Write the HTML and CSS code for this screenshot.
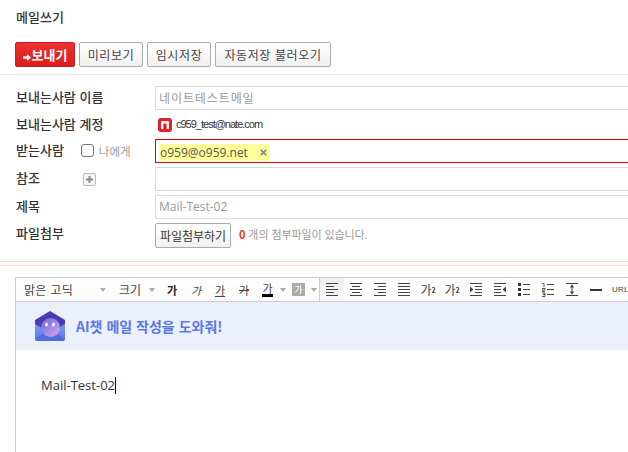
FILE: index.html
```html
<!DOCTYPE html>
<html lang="ko">
<head>
<meta charset="utf-8">
<title>메일쓰기</title>
<link rel="stylesheet" href="styles.css">
</head>
<body>
<svg class="defs" width="0" height="0" aria-hidden="true">
  <defs>
    <linearGradient id="mbody" x1="0" y1="0" x2="0" y2="1"><stop offset="0" stop-color="#7fa0f2"/><stop offset="1" stop-color="#5b78e6"/></linearGradient>
    <linearGradient id="mface" x1="0" y1="0" x2="1" y2="1"><stop offset="0" stop-color="#6468dc"/><stop offset="0.55" stop-color="#a58ae8"/><stop offset="1" stop-color="#e6a8d8"/></linearGradient>
  </defs>
</svg>
<header class="title-bar"><h1 class="title">메일쓰기</h1></header>
<div class="actions">
  <button class="btn btn-send"><svg class="arrow" width="8" height="7" viewBox="0 0 8 7"><path d="M0 2.200h4V0l4 3.500L4 7V4.800H0z" fill="#fff"/></svg>보내기</button>
  <button class="btn">미리보기</button>
  <button class="btn">임시저장</button>
  <button class="btn btn-wide">자동저장 불러오기</button>
</div>
<form class="form">
  <div class="row">
    <label class="label">보내는사람 이름</label>
    <div class="field placeholder">네이트테스트메일</div>
  </div>
  <div class="row row-account">
    <label class="label">보내는사람 계정</label>
    <div class="account">
      <svg class="nate" width="14" height="14" viewBox="0 0 14 14"><rect width="14" height="14" rx="3" fill="#e0202a"/><path d="M3 11V4.500C3 3.600 3.600 3 4.500 3h5C10.400 3 11 3.600 11 4.500V11H8.600V5.400H5.400V11z" fill="#fff"/></svg>
      <span class="account-mail">c959_test@nate.com</span>
    </div>
  </div>
  <div class="row">
    <div class="label label-check">
      <span>받는사람</span>
      <span class="check-wrap"><span class="checkbox"></span><span class="me">나에게</span></span>
    </div>
    <div class="field field-to"><span class="chip">o959@o959.net<svg class="chip-x" width="7" height="7" viewBox="0 0 7 7"><path d="M.8.8l5.400 5.400M6.200.8L.8 6.200" stroke="#888" stroke-width="1.700"/></svg></span></div>
  </div>
  <div class="row">
    <div class="label label-check">
      <span>참조</span>
      <span class="plus"><svg width="7" height="7" viewBox="0 0 7 7"><path d="M2.500 0h2v2.500H7v2H4.500V7h-2V4.500H0v-2h2.500z" fill="#8a8a8a"/></svg></span>
    </div>
    <div class="field"></div>
  </div>
  <div class="row">
    <label class="label">제목</label>
    <div class="field placeholder latin">Mail-Test-02</div>
  </div>
  <div class="row row-file">
    <label class="label">파일첨부</label>
    <div class="attach">
      <button class="btn btn-file" type="button">파일첨부하기</button>
      <span class="attach-note"><b class="count">0</b> 개의 첨부파일이 있습니다.</span>
    </div>
  </div>
</form>
<div class="double-rule"></div>
<section class="editor">
  <div class="toolbar">
    <span class="font-select">맑은 고딕</span><i class="caret caret-font"></i>
    <span class="size-select">크기</span><i class="caret caret-size"></i>
    <span class="tb b">가</span>
    <span class="tb it">가</span>
    <span class="tb un">가</span>
    <span class="tb st">가</span>
    <span class="tb color"><span class="color-g">가</span></span><i class="caret caret-color"></i>
    <span class="bgcolor">가</span><i class="caret caret-bg"></i>
    <span class="tb active"><svg width="12" height="13" viewBox="0 0 12 13"><path d="M0 .5h12M0 3.500h8M0 6.500h12M0 9.500h8M0 12.500h12" stroke="#444"/></svg></span>
    <span class="tb"><svg width="12" height="13" viewBox="0 0 12 13"><path d="M0 .5h12M2 3.500h8M0 6.500h12M2 9.500h8M0 12.500h12" stroke="#444"/></svg></span>
    <span class="tb"><svg width="12" height="13" viewBox="0 0 12 13"><path d="M0 .5h12M4 3.500h8M0 6.500h12M4 9.500h8M0 12.500h12" stroke="#444"/></svg></span>
    <span class="tb"><svg width="12" height="13" viewBox="0 0 12 13"><path d="M0 .5h12M0 3.500h12M0 6.500h12M0 9.500h12M0 12.500h12" stroke="#444"/></svg></span>
    <span class="tb tb-script">가<sup>2</sup></span>
    <span class="tb tb-script">가<sub>2</sub></span>
    <span class="tb"><svg width="12" height="13" viewBox="0 0 12 13"><path d="M0 .5h12M5 3.500h7M5 6.500h7M5 9.500h7M0 12.500h12" stroke="#444"/><path d="M0 3.500l3.500 3L0 9.500z" fill="#444"/></svg></span>
    <span class="tb"><svg width="12" height="13" viewBox="0 0 12 13"><path d="M0 .5h12M0 3.500h7M0 6.500h7M0 9.500h7M0 12.500h12" stroke="#444"/><path d="M12 3.500L8.500 6.500l3.500 3z" fill="#444"/></svg></span>
    <span class="tb"><svg width="12" height="13" viewBox="0 0 12 13"><path d="M0 0h3v3H0zM0 5h3v3H0zM0 10h3v3H0z" fill="#333"/><path d="M5 1.500h7M5 6.500h7M5 11.500h7" stroke="#444"/></svg></span>
    <span class="tb"><svg width="12" height="14" viewBox="0 0 12 14"><path d="M5 1.500h7M5 6.500h7M5 11.500h7" stroke="#444"/><path d="M.5.500h1.500v3.500M0 5.500h3V7H0v1.500h3M0 10h3v1.500H1M1 11.500h2V13.500H0" stroke="#444" fill="none" stroke-width=".9"/></svg></span>
    <span class="tb"><svg width="12" height="13" viewBox="0 0 12 13"><path d="M0 .5h12M0 12.500h12M6 2v9" stroke="#444"/><path d="M6 1.500L3.800 4.500h4.400zM6 11.500L3.800 8.500h4.400z" fill="#444"/></svg></span>
    <span class="tb"><svg width="12" height="2" viewBox="0 0 12 2"><rect width="12" height="2" fill="#333"/></svg></span>
    <span class="tb tb-url">URL</span>
  </div>
  <div class="banner">
    <svg class="mascot" width="30" height="30" viewBox="0 0 30 30">
      <path d="M0 9h30v18a3 3 0 0 1-3 3H3a3 3 0 0 1-3-3z" fill="url(#mbody)"/>
      <path d="M0 9L15 0l15 9v4L15 22 0 13z" fill="#4a3bb5"/>
      <path d="M0 28L11 20h8l11 8-1 2H1z" fill="#4f6de0"/>
      <circle cx="15.500" cy="16.500" r="9.500" fill="url(#mface)"/>
      <ellipse cx="11.500" cy="13.500" rx="1.400" ry="2" fill="#fff"/>
      <ellipse cx="18.500" cy="13.500" rx="1.400" ry="2" fill="#fff"/>
    </svg>
    <span class="banner-text">AI챗 메일 작성을 도와줘!</span>
  </div>
  <div class="body-area"><span class="body-text">Mail-Test-02</span><span class="cursor"></span></div>
</section>
</body>
</html>
```
FILE: styles.css
```css
* { box-sizing: border-box; }
html, body { margin: 0; padding: 0; }
body {
  width: 628px;
  height: 452px;
  overflow: hidden;
  background: #fff;
  color: #333;
  font-family: "Noto Sans CJK KR", "Noto Sans", sans-serif;
  font-size: 12px;
}
.defs { position: absolute; }
.title-bar { height: 42px; padding: 9px 0 0 16px; }
.title { margin: 0; font-size: 13px; font-weight: 500; line-height: 16px; color: #333; }
.actions {
  display: flex;
  gap: 4px;
  height: 33px;
  padding-left: 15px;
  border-bottom: 1px solid #e8e8e8;
}
.btn {
  width: 64px;
  height: 25px;
  padding: 0;
  border: 1px solid #aaa;
  border-radius: 2px;
  background: linear-gradient(#fff, #f0f0f0);
  color: #444;
  font: 12px/1 "Noto Sans CJK KR", sans-serif;
  letter-spacing: .6px;
}
.btn-send {
  width: 60px;
  border-color: #c51c1c;
  background: linear-gradient(#ee3030, #dc1c1c);
  color: #fff;
  font-size: 13px;
  font-weight: 700;
  letter-spacing: 0;
}
.arrow { margin-right: 1px; vertical-align: -0.5px; }
.btn-wide { width: 116px; }
.form {
  display: flex;
  flex-direction: column;
  gap: 4px;
  padding: 11px 0 0 16px;
}
.row { display: flex; align-items: center; height: 24px; }
.row-account { height: 21px; }
.row-file { height: 25px; }
.label {
  display: flex;
  align-items: center;
  flex: 0 0 139px;
  height: 22px;
  margin-top: -3px;
  font-size: 13px;
  font-weight: 500;
  color: #333;
}
.row-account .label { margin-top: -2px; }
.row-file .label { margin-top: -6px; }
.label-check { position: relative; }
.check-wrap { display: flex; align-items: center; gap: 5px; margin-left: 17px; margin-top: 2px; }
.checkbox { width: 13px; height: 13px; border: 1px solid #777; border-radius: 3px; background: #fff; }
.me { font-size: 11.500px; font-weight: 400; color: #999; }
.plus {
  display: flex;
  align-items: center;
  justify-content: center;
  width: 13px;
  height: 13px;
  margin-left: 43px;
  margin-top: 3px;
  border: 1px solid #bbb;
  border-radius: 2px;
  background: #f5f5f5;
}
.field {
  flex: 1;
  height: 24px;
  padding-left: 3px;
  border: 1px solid #d9d9d9;
  border-right: 0;
  line-height: 22px;
  font-size: 12px;
}
.placeholder { color: #999; letter-spacing: .9px; }
.latin { font-family: "Open Sans", sans-serif; letter-spacing: 0; }
.field-to { border-color: #e00000; padding: 3px 0 0 3px; line-height: 17px; }
.chip {
  display: inline-flex;
  align-items: center;
  width: 110px;
  height: 17px;
  padding-left: 1px;
  background: #ffff99;
  color: #555;
  font-family: "Open Sans", sans-serif;
  font-size: 12px;
  letter-spacing: 0;
}
.chip-x { margin-left: 12px; }
.account { display: flex; align-items: center; gap: 4px; padding-left: 3px; }
.nate { display: block; }
.account-mail { font-family: "Liberation Sans", sans-serif; font-size: 11px; letter-spacing: -1px; color: #333; margin-top: -1px; }
.attach { display: flex; align-items: center; gap: 8px; }
.btn-file { width: 76px; letter-spacing: 0; color: #333; }
.attach-note { font-size: 11px; letter-spacing: -.1px; color: #999; margin-top: -3px; }
.count { color: #e8381a; font-weight: 700; }
.double-rule {
  height: 5px;
  margin-top: 13px;
  border-top: 1px solid #f8d8d4;
  border-bottom: 1px solid #f8d8d4;
}
.editor {
  margin: 11px 0 0 15px;
  height: 175px;
  border-left: 1px solid #ccc;
  display: flex;
  flex-direction: column;
}
.toolbar {
  display: flex;
  align-items: center;
  flex: 0 0 25px;
  border-top: 1px solid #ccc;
  border-bottom: 1px solid #ccc;
  background: linear-gradient(#fff, #fafafa);
  color: #333;
  white-space: nowrap;
}
.font-select { flex: 0 0 69px; padding-left: 8px; font-size: 12px; letter-spacing: .3px; color: #444; }
.caret {
  flex: none;
  width: 0;
  height: 0;
  margin: 0 3px;
  border: 3.500px solid transparent;
  border-top: 4px solid #aaa;
  border-bottom: 0;
}
.caret-font { margin: 0 10px 0 15px; }
.size-select { flex: 0 0 27px; margin-left: 3px; font-size: 12px; color: #444; }
.caret-size { margin: 0 5px 0 3px; }
.tb {
  flex: 0 0 24px;
  height: 23px;
  display: flex;
  align-items: center;
  justify-content: center;
  font-size: 11px;
  color: #444;
}
.b { font-weight: 700; color: #222; }
.it { font-style: italic; }
.un { text-decoration: underline; }
.st { text-decoration: line-through; }
.color-g { border-bottom: 3px solid #000; line-height: 11px; padding-bottom: 0; }
.tb.color { flex-basis: 23px; }
.caret-color { margin: 0 3px 0 1px; }
.bgcolor { flex: 0 0 13px; height: 13px; margin-left: 3px; background: #aaa; color: #fff; font-size: 9px; line-height: 13px; text-align: center; }
.caret-bg { margin: 0 2px 0 6px; }
.active { flex-basis: 25px; border-left: 1px solid #ccc; background: linear-gradient(#eee, #f8f8f8); }
.tb-script { font-size: 12px; }
.tb-script sup, .tb-script sub { font-size: 7px; line-height: 0; font-weight: 700; }
.tb.tb-url { flex-basis: 19px; justify-content: flex-start; padding-left: 4px; font-size: 8px; font-weight: 500; font-family: "Liberation Sans", sans-serif; letter-spacing: .2px; }
.banner {
  display: flex;
  align-items: center;
  flex: 0 0 48px;
  gap: 11px;
  padding-left: 19px;
  background: #eceffc;
}
.mascot { display: block; }
.banner-text { font-size: 14px; font-weight: 700; color: #5a78e6; }
.body-area { padding: 14px 0 0 25px; display: flex; align-items: center; height: 56px; }
.body-text { font-family: "Open Sans", sans-serif; font-size: 13px; color: #333; }
.cursor { width: 1px; height: 17px; background: #000; }
```
